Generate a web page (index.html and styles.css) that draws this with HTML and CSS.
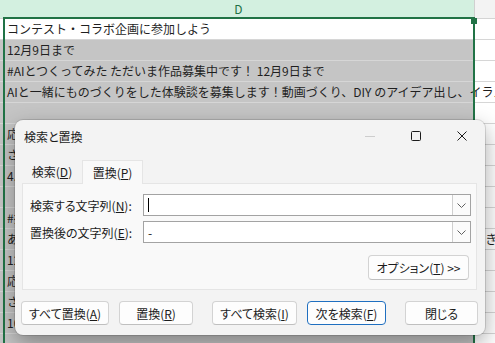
FILE: index.html
```html
<!DOCTYPE html>
<html lang="ja">
<head>
    <meta charset="UTF-8">
    <meta name="viewport" content="width=device-width, initial-scale=1.0">
    <title>検索と置換</title>
    <link rel="stylesheet" href="styles.css">
</head>
<body>

    <!-- シート (D列) -->
    <div class="sheet">
        <div class="col-head">
            <div class="head-d">D</div>
            <div class="head-e"></div>
        </div>
        <div class="row first">コンテスト・コラボ企画に参加しよう</div>
        <div class="row">12月9日まで</div>
        <div class="row">#AIとつくってみた ただいま作品募集中です！ 12月9日まで</div>
        <div class="row">AIと一緒にものづくりをした体験談を募集します！動画づくり、DIY のアイデア出し、イラスト制作など</div>
        <div class="row"></div>
        <div class="row">応募は特設ページから</div>
        <div class="row">さまざまな作品をお待ちしています</div>
        <div class="row">4.応募要項を確認してください</div>
        <div class="row"></div>
        <div class="row">#推しの魅力 ただいま作品募集中です！ 12月9日まで</div>
        <div class="row">あなたが作ったものや、体験したことを気軽に投稿してください。写真や動画でも、すてき</div>
        <div class="row">12月9日まで</div>
        <div class="row">応募は特設ページから</div>
        <div class="row">さまざまな作品をお待ちしています</div>
        <div class="row">10名様にプレゼント</div>
        <div class="row"></div>

        <div class="selection"><span class="handle"></span></div>
    </div>

    <!-- 検索と置換ダイアログ -->
    <div class="dialog">
        <div class="titlebar">
            <span class="title">検索と置換</span>
            <div class="caption">
                <span class="cap-btn">
                    <svg width="10" height="10" viewBox="0 0 10 10"><path d="M0 5.5h10" stroke="#cdcdcd" fill="none"/></svg>
                </span>
                <span class="cap-btn">
                    <svg width="10" height="10" viewBox="0 0 10 10"><rect x="0.5" y="0.5" width="9" height="9" rx="1" fill="none" stroke="#1b1b1b"/></svg>
                </span>
                <span class="cap-btn">
                    <svg width="10" height="10" viewBox="0 0 10 10"><path d="M0.5 0.5l9 9M9.5 0.5l-9 9" stroke="#1b1b1b" fill="none"/></svg>
                </span>
            </div>
        </div>

        <div class="tabs">
            <span class="tab">検索(<u>D</u>)</span>
            <span class="tab active">置換(<u>P</u>)</span>
        </div>

        <div class="panel">
            <div class="field">
                <label>検索する文字列(<u>N</u>):</label>
                <div class="combo">
                    <span class="caret"></span>
                    <span class="drop"><svg width="9" height="5" viewBox="0 0 9 5"><path d="M0.5 0.5l4 4 4-4" stroke="#616161" fill="none"/></svg></span>
                </div>
            </div>
            <div class="field">
                <label>置換後の文字列(<u>E</u>):</label>
                <div class="combo">
                    <span class="value">-</span>
                    <span class="drop"><svg width="9" height="5" viewBox="0 0 9 5"><path d="M0.5 0.5l4 4 4-4" stroke="#616161" fill="none"/></svg></span>
                </div>
            </div>
            <div class="options-row">
                <button class="btn options">オプション(<u>T</u>) &gt;&gt;</button>
            </div>
        </div>

        <div class="actions">
            <button class="btn b-replace-all">すべて置換(<u>A</u>)</button>
            <button class="btn b-replace">置換(<u>R</u>)</button>
            <button class="btn b-find-all">すべて検索(<u>I</u>)</button>
            <button class="btn b-find-next">次を検索(<u>F</u>)</button>
            <button class="btn b-close">閉じる</button>
        </div>
    </div>

</body>
</html>
```

FILE: styles.css
```css
* {
    box-sizing: border-box;
}
body {
    margin: 0;
    width: 495px;
    height: 343px;
    overflow: hidden;
    position: relative;
    background: #fff;
    font-family: "Noto Sans CJK JP", sans-serif;
    color: #1f1f1f;
}

/* sheet */
.sheet {
    position: relative;
    height: 343px;
    overflow: hidden;
}
.col-head {
    display: flex;
    height: 19px;
    border-bottom: 1px solid #d4d4d4;
    font-size: 12px;
}
.head-d {
    width: 474px;
    padding-left: 3px;
    background: #d3f0e0;
    color: #1e7145;
    text-align: center;
    line-height: 17px;
}
.head-e {
    flex: 1;
    background: #f3f3f3;
    border-left: 1px solid #d0d0d0;
}
.row {
    height: 21px;
    padding-left: 7px;
    border-bottom: 1px solid #d6d6d6;
    background: linear-gradient(to right, #c5c5c5 474px, #fff 474px);
    font-size: 12px;
    line-height: 20px;
    white-space: nowrap;
}
.row.first {
    background: #fff;
}
.selection {
    position: absolute;
    left: 3px;
    top: 17px;
    width: 472px;
    height: 340px;
    border: 2px solid #217346;
}
.handle {
    position: absolute;
    right: -4px;
    top: -1px;
    width: 6px;
    height: 6px;
    background: #217346;
}

/* dialog */
.dialog {
    position: absolute;
    left: 15px;
    top: 120px;
    width: 470px;
    height: 215px;
    background: #f3f3f3;
    border-radius: 8px;
    box-shadow: 0 0 0 1px rgba(0, 0, 0, 0.12), 0 8px 22px rgba(0, 0, 0, 0.35);
    font-size: 12px;
    color: #1b1b1b;
    font-feature-settings: "palt";
}
.titlebar {
    display: flex;
    align-items: center;
    height: 32px;
}
.title {
    flex: 1;
    padding-left: 9px;
}
.caption {
    display: flex;
    align-self: stretch;
}
.cap-btn {
    width: 46px;
    display: flex;
    align-items: center;
    justify-content: center;
}
.tabs {
    display: flex;
    align-items: flex-end;
    height: 23px;
    margin: 8px 0 0 7px;
}
.tab {
    width: 60px;
    height: 22px;
    line-height: 22px;
    text-align: center;
}
.tab.active {
    position: relative;
    z-index: 1;
    width: 61px;
    height: 24px;
    margin-bottom: -1px;
    line-height: 23px;
    background: #f9f9f9;
    border: 1px solid #e5e5e5;
    border-bottom: none;
}
u {
    text-underline-offset: 1px;
}
.panel {
    height: 107px;
    margin: 0 8px 0 7px;
    padding: 10px 5px 9px 7px;
    background: #f9f9f9;
    border: 1px solid #e5e5e5;
}
.field {
    display: flex;
    align-items: center;
    height: 22px;
}
.field + .field {
    margin-top: 5px;
}
.field label {
    width: 113px;
}
.combo {
    flex: 1;
    height: 22px;
    display: flex;
    align-items: center;
    padding-left: 4px;
    background: #fff;
    border: 1px solid #a3a3a3;
}
.caret {
    width: 1px;
    height: 14px;
    background: #000;
}
.drop {
    margin-left: auto;
    width: 18px;
    height: 20px;
    display: flex;
    align-items: center;
    justify-content: center;
    background: #fbfbfb;
    border-left: 1px solid #cfcfcf;
}
.options-row {
    display: flex;
    justify-content: flex-end;
    margin-top: 12px;
}
.btn {
    height: 24px;
    padding: 0;
    background: #fdfdfd;
    border: 1px solid #d3d3d3;
    border-bottom-color: #bfbfbf;
    border-radius: 4px;
    font-family: inherit;
    font-size: 12px;
    color: #1b1b1b;
    font-feature-settings: "palt";
}
.options {
    width: 101px;
    height: 25px;
    margin-right: 2px;
}
.actions {
    display: flex;
    margin-top: 11px;
    padding-left: 6px;
}
.b-replace-all { width: 88px; }
.b-replace { width: 74px; margin-left: 10px; }
.b-find-all { width: 85px; margin-left: 19px; }
.b-find-next { width: 79px; margin-left: 10px; border-color: #1f6fc0; }
.b-close { width: 73px; margin-left: 19px; }
```
